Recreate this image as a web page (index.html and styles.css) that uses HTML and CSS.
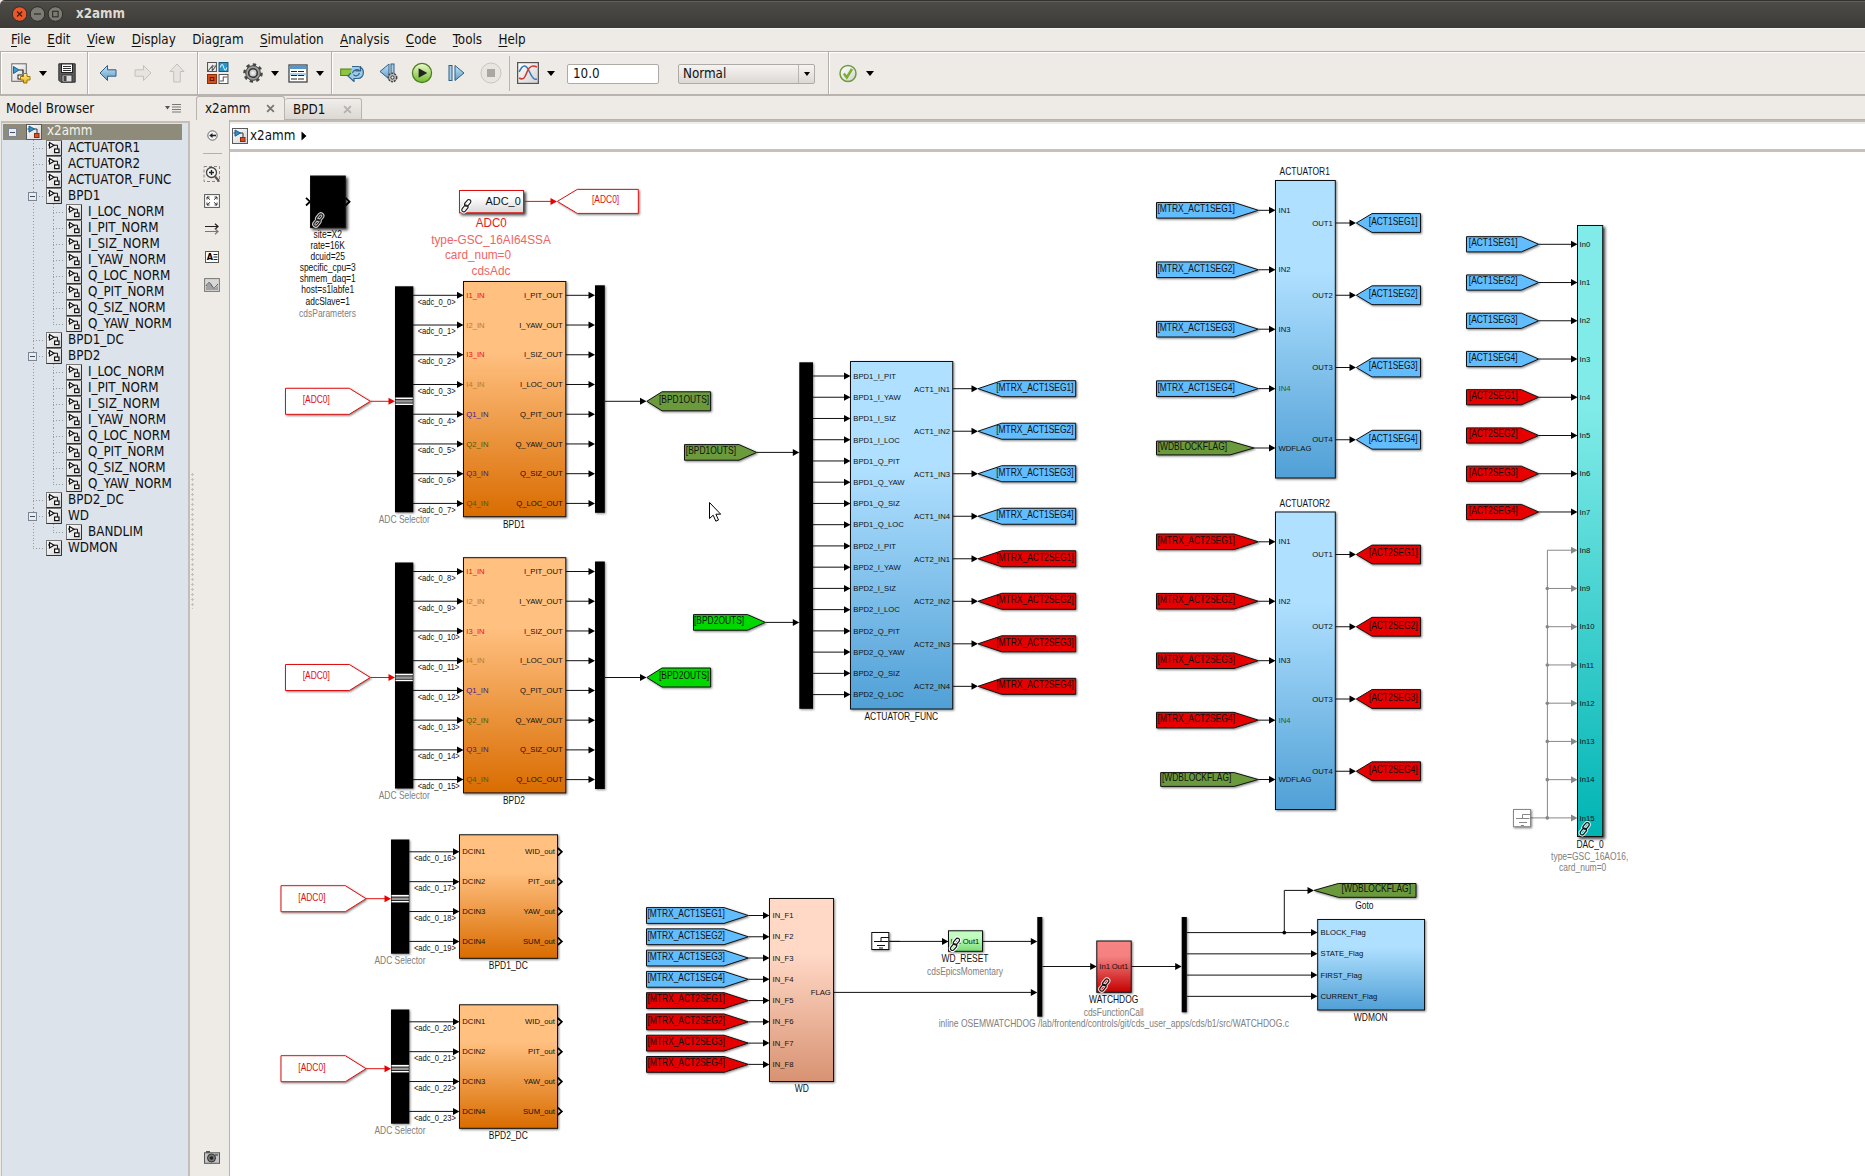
FILE: index.html
```html
<!DOCTYPE html>
<html lang="en">
<head>
<meta charset="utf-8">
<title>x2amm</title>
<link rel="stylesheet" href="styles.css">
</head>
<body>
<svg class="defs" width="0" height="0" aria-hidden="true">
  <defs>
    <linearGradient id="g-paper" x1="0" y1="0" x2="1" y2="1"><stop offset="0" stop-color="#fff"/><stop offset="1" stop-color="#d2d2d2"/></linearGradient>
    <linearGradient id="g-arrow" x1="0" y1="0" x2="0" y2="1"><stop offset="0" stop-color="#c4e2f4"/><stop offset="1" stop-color="#5f9dc8"/></linearGradient>
    <linearGradient id="g-play" x1="0" y1="0" x2="0" y2="1"><stop offset="0" stop-color="#eef9d0"/><stop offset="1" stop-color="#6cbb2a"/></linearGradient>
    <linearGradient id="g-plus" x1="0" y1="0" x2="0" y2="1"><stop offset="0" stop-color="#fff0a0"/><stop offset="1" stop-color="#f0b000"/></linearGradient>
    <symbol id="i-model" viewBox="0 0 16 16">
      <rect x=".5" y=".5" width="15" height="15" fill="url(#g-paper)" stroke="#5a5a5a"/>
      <path d="M1.5 5h2M8 5h3v4" fill="none" stroke="#333"/>
      <path d="M3 2l5.5 3L3 8.200z" fill="#2f8fca" stroke="#1c5f8c"/>
      <rect x="8.500" y="9.500" width="4.500" height="4" fill="#d8502a" stroke="#8c2a10"/>
    </symbol>
    <symbol id="i-sub" viewBox="0 0 16 16">
      <rect x=".5" y=".5" width="15" height="15" fill="url(#g-paper)" stroke="#777"/>
      <path d="M15.500 1v14.500H.5" fill="none" stroke="#333"/>
      <path d="M2 5h1.500M8 5.200h3.500v3.500" fill="none" stroke="#111"/>
      <path d="M3.500 2.600L8 5.200 3.500 8z" fill="#fff" stroke="#111" stroke-width="1.200"/>
      <rect x="8.600" y="9" width="4.400" height="3.600" fill="#fff" stroke="#111" stroke-width="1.200"/>
    </symbol>
  </defs>
</svg>

<header class="titlebar">
  <svg class="winbtns" width="54" height="18" viewBox="0 0 54 18">
    <circle cx="8.600" cy="9" r="7.300" fill="#e9582b" stroke="#2c2b27"/><path d="M6.100 6.500l5 5M11.100 6.500l-5 5" stroke="#4a1c0c" stroke-width="1.300"/>
    <circle cx="26.500" cy="9" r="7.300" fill="#7d7b73" stroke="#2c2b27"/><path d="M23 9h7" stroke="#33322e" stroke-width="1.300"/>
    <circle cx="44.400" cy="9" r="7.300" fill="#7d7b73" stroke="#2c2b27"/><rect x="41.600" y="6.300" width="5.500" height="5.500" fill="none" stroke="#33322e" stroke-width="1.200"/>
  </svg>
  <h1 class="title">x2amm</h1>
</header>

<nav class="menubar">
  <span><u>F</u>ile</span><span><u>E</u>dit</span><span><u>V</u>iew</span><span><u>D</u>isplay</span><span>Diag<u>r</u>am</span><span><u>S</u>imulation</span><span><u>A</u>nalysis</span><span><u>C</u>ode</span><span><u>T</u>ools</span><span><u>H</u>elp</span>
</nav>

<div class="toolbar">
  <div class="group g-file">
    <svg width="20" height="21" viewBox="0 0 20 21"><rect x=".8" y=".8" width="14.500" height="17.500" fill="url(#g-paper)" stroke="#666"/><path d="M2.500 3.500L8 7l-5.500 3.500z" fill="#3a9ad6" stroke="#1c5f8c"/><path d="M8 7h4v4" fill="none" stroke="#222" stroke-width="1.200"/><rect x="7" y="12" width="5" height="4" fill="#fff" stroke="#222"/><path d="M12.500 10.500h3.500v3h3v3.500h-3v3h-3.500v-3h-3v-3.500h3z" fill="url(#g-plus)" stroke="#9a7410"/></svg>
    <i class="caret"></i>
    <svg width="18" height="20" viewBox="0 0 18 20"><path d="M.8.8h16.400v18.400H2.800l-2-2z" fill="#5c5c5c" stroke="#333"/><rect x="3.500" y="1" width="11" height="8.500" fill="#fff" stroke="#222"/><path d="M5 3.500h8M5 5.500h8M5 7.500h8" stroke="#333"/><rect x="4" y="12" width="10" height="7" fill="#ddd" stroke="#333"/><rect x="5.500" y="13" width="3" height="5" fill="#444"/></svg>
  </div>
  <div class="group g-nav">
    <svg width="18" height="18" viewBox="0 0 18 18"><path d="M1 9l7.500-7.500v4.300h8.500v6.400H8.500v4.300z" fill="url(#g-arrow)" stroke="#2f5f86"/></svg>
    <svg width="18" height="18" viewBox="0 0 18 18"><path d="M17 9L9.500 1.500v4.300H1v6.400h8.500v4.300z" fill="#e6e4e1" stroke="#c3c0bc"/></svg>
    <svg width="16" height="20" viewBox="0 0 16 20"><path d="M8 1l7 7.500h-3.700V19H4.700V8.500H1z" fill="#e6e4e1" stroke="#c3c0bc"/></svg>
  </div>
  <div class="group g-lib">
    <svg width="22" height="22" viewBox="0 0 21 22" preserveAspectRatio="none"><rect x=".5" y=".5" width="8.500" height="9" fill="#eee" stroke="#555"/><path d="M1 9l4-5v5M5 4h2M5 9l4-6" fill="none" stroke="#555"/><rect x="11.500" y=".5" width="8.500" height="9" fill="#2a93c8" stroke="#175a80"/><path d="M12.500 5.500c1.500-4 2.500-4 3.500 0s2 3 3 0" fill="none" stroke="#d8f0ff"/><rect x=".5" y="12.500" width="8.500" height="9" fill="#d8501e" stroke="#8a2c0c"/><rect x="3" y="15.500" width="3.500" height="3" fill="none" stroke="#5a1a06"/><rect x="11.500" y="12.500" width="8.500" height="9" fill="#fff" stroke="#555"/><path d="M12.500 19h3v-4h4" fill="none" stroke="#555"/></svg>
    <svg width="20" height="20" viewBox="0 0 20 20"><circle cx="10" cy="10" r="8.500" fill="none" stroke="#444" stroke-width="2.500" stroke-dasharray="3.300 3.300"/><circle cx="10" cy="10" r="7.300" fill="#9b9b9b" stroke="#444"/><circle cx="10" cy="10" r="4.300" fill="#ccc" stroke="#333" stroke-width="1.600"/><circle cx="10" cy="10" r="1.800" fill="#eee"/></svg>
    <i class="caret"></i>
    <svg width="20" height="19" viewBox="0 0 20 19"><rect x="1" y="1" width="18" height="17" fill="#fff" stroke="#444" stroke-width="1.300"/><rect x="1.700" y="1.700" width="16.600" height="3.300" fill="#5796c8"/><rect x="1.700" y="9" width="16.600" height="2.500" fill="#a9cdea"/><path d="M3 7.500h14M3 11.500h14M3 15h14" stroke="#222" stroke-width="1.200" stroke-dasharray="6 1"/></svg>
    <i class="caret"></i>
  </div>
  <div class="group g-sim">
    <svg width="24" height="18" viewBox="0 0 24 18"><rect x=".7" y="5" width="12" height="6.500" fill="#8cc63c" stroke="#567c1c"/><path d="M12 2.500h6a4.500 5 0 0 1 0 12h-4v3L8 12l3-3" fill="#9fcbe8" stroke="#33658c" stroke-width="1.200"/><path d="M20.500 2v5h-5M12.500 9c1-3.500 5-4 7-2.500M19.500 9c-1 3.500-5 3.500-6 1.500" fill="none" stroke="#33658c" stroke-width="1.200"/></svg>
    <svg width="19" height="20" viewBox="0 0 19 20"><path d="M10 1v15L1 8.500z" fill="url(#g-arrow)" stroke="#2f5f86"/><rect x="12" y="1" width="3" height="12" fill="#a7d0ec" stroke="#2f5f86"/><circle cx="13.500" cy="14.500" r="4.200" fill="#bbb" stroke="#444" stroke-width="1.500" stroke-dasharray="2 1"/><circle cx="13.500" cy="14.500" r="1.600" fill="#eee" stroke="#333"/></svg>
    <svg width="22" height="22" viewBox="0 0 22 23"><circle cx="11" cy="11.500" r="10" fill="url(#g-play)" stroke="#4b7a1e" stroke-width="1.300"/><path d="M7.500 6.500l9 5-9 5z" fill="#222"/></svg>
    <svg width="17" height="18" viewBox="0 0 17 18"><rect x="1" y="1.500" width="3" height="15" fill="#a7d0ec" stroke="#2f5f86"/><path d="M7 1.500v15l9-7.500z" fill="url(#g-arrow)" stroke="#2f5f86"/></svg>
    <svg width="22" height="22" viewBox="0 0 22 22"><circle cx="11" cy="11" r="10" fill="#e8e5e1" stroke="#c9c6c2"/><rect x="7" y="7" width="8" height="8" fill="#aaa7a3"/></svg>
    <i class="sep"></i>
    <svg width="22" height="22" viewBox="0 0 21 22" preserveAspectRatio="none"><rect x=".6" y=".6" width="19.800" height="20.800" fill="url(#g-paper)" stroke="#555" stroke-width="1.200"/><path d="M2 10c4-9 7-7 10 0s5 8 7 7" fill="none" stroke="#3a7ab8" stroke-width="1.500"/><path d="M2 16c5 3 6-2 8-7s5-6 9-4" fill="none" stroke="#d03a30" stroke-width="1.500"/></svg>
    <i class="caret"></i>
    <div class="field">10.0</div>
    <div class="combo"><span>Normal</span><b><i class="caret small"></i></b></div>
  </div>
  <div class="group g-check">
    <svg width="18" height="19" viewBox="0 0 18 19"><circle cx="9" cy="9.500" r="8" fill="url(#g-paper)" stroke="#6f9a3a" stroke-width="1.500"/><path d="M4.800 9.500l3 4L13 5" fill="none" stroke="#7ab02a" stroke-width="2.400"/></svg>
    <i class="caret"></i>
  </div>
</div>

<div class="body">
  <aside class="browser">
    <div class="browser-head"><span>Model Browser</span>
      <svg width="16" height="9" viewBox="0 0 16 9"><path d="M0 2h5L2.500 5.500z" fill="#555"/><path d="M7 .5h9M7 3h9M7 5.500h9M7 8h9" stroke="#777"/></svg>
    </div>
    <div class="tree">
      <div class="root"><i class="box"></i><svg width="16" height="16"><use href="#i-model"/></svg><span>x2amm</span></div>
      <ul class="l1">
        <li><div><svg><use href="#i-sub"/></svg>ACTUATOR1</div></li>
        <li><div><svg><use href="#i-sub"/></svg>ACTUATOR2</div></li>
        <li><div><svg><use href="#i-sub"/></svg>ACTUATOR_FUNC</div></li>
        <li><div><i class="box"></i><svg><use href="#i-sub"/></svg>BPD1</div>
          <ul>
            <li><div><svg><use href="#i-sub"/></svg>I_LOC_NORM</div></li>
            <li><div><svg><use href="#i-sub"/></svg>I_PIT_NORM</div></li>
            <li><div><svg><use href="#i-sub"/></svg>I_SIZ_NORM</div></li>
            <li><div><svg><use href="#i-sub"/></svg>I_YAW_NORM</div></li>
            <li><div><svg><use href="#i-sub"/></svg>Q_LOC_NORM</div></li>
            <li><div><svg><use href="#i-sub"/></svg>Q_PIT_NORM</div></li>
            <li><div><svg><use href="#i-sub"/></svg>Q_SIZ_NORM</div></li>
            <li><div><svg><use href="#i-sub"/></svg>Q_YAW_NORM</div></li>
          </ul>
        </li>
        <li><div><svg><use href="#i-sub"/></svg>BPD1_DC</div></li>
        <li><div><i class="box"></i><svg><use href="#i-sub"/></svg>BPD2</div>
          <ul>
            <li><div><svg><use href="#i-sub"/></svg>I_LOC_NORM</div></li>
            <li><div><svg><use href="#i-sub"/></svg>I_PIT_NORM</div></li>
            <li><div><svg><use href="#i-sub"/></svg>I_SIZ_NORM</div></li>
            <li><div><svg><use href="#i-sub"/></svg>I_YAW_NORM</div></li>
            <li><div><svg><use href="#i-sub"/></svg>Q_LOC_NORM</div></li>
            <li><div><svg><use href="#i-sub"/></svg>Q_PIT_NORM</div></li>
            <li><div><svg><use href="#i-sub"/></svg>Q_SIZ_NORM</div></li>
            <li><div><svg><use href="#i-sub"/></svg>Q_YAW_NORM</div></li>
          </ul>
        </li>
        <li><div><svg><use href="#i-sub"/></svg>BPD2_DC</div></li>
        <li><div><i class="box"></i><svg><use href="#i-sub"/></svg>WD</div>
          <ul>
            <li><div><svg><use href="#i-sub"/></svg>BANDLIM</div></li>
          </ul>
        </li>
        <li><div><svg><use href="#i-sub"/></svg>WDMON</div></li>
      </ul>
    </div>
  </aside>
  <div class="splitter"></div>

  <section class="editor">
    <div class="tabs">
      <div class="tab active"><span>x2amm</span><svg width="9" height="9" viewBox="0 0 8 8"><path d="M1 1l6 6M7 1L1 7" stroke="#777" stroke-width="1.600"/></svg></div>
      <div class="tab"><span>BPD1</span><svg width="9" height="9" viewBox="0 0 8 8"><path d="M1 1l6 6M7 1L1 7" stroke="#b5b2ae" stroke-width="1.600"/></svg></div>
      <div class="tabfill"></div>
    </div>
    <div class="work">
      <div class="palette">
        <svg class="p-hide" width="11" height="11" viewBox="0 0 11 11"><circle cx="5.500" cy="5.500" r="4.700" fill="#f4f4f4" stroke="#666"/><path d="M5 5.500h4" stroke="#222" stroke-width="1.600"/><path d="M5.500 3L2.200 5.500 5.500 8z" fill="#222"/></svg>
        <i class="p-line"></i>
        <svg width="18" height="18" viewBox="0 0 18 18"><rect x="1" y="1.500" width="15.500" height="15" fill="none" stroke="#888" stroke-dasharray="3 2"/><circle cx="8.500" cy="7.500" r="5" fill="#f6f6f6" stroke="#444" stroke-width="1.300"/><path d="M6 7.500h5M8.500 5v5" stroke="#222" stroke-width="1.400"/><path d="M12 11.500l4 4.500" stroke="#555" stroke-width="2.200"/></svg>
        <svg width="16" height="14" viewBox="0 0 16 14"><rect x=".6" y=".6" width="14.800" height="12.800" fill="#fff" stroke="#555"/><path d="M3 5.500V3h2.500M10.500 3H13v2.500M13 8.500V11h-2.500M5.500 11H3V8.500M3 3l3 2.700M13 3l-3 2.700M13 11l-3-2.700M3 11l3-2.700" fill="none" stroke="#333"/></svg>
        <svg width="14" height="12" viewBox="0 0 14 12"><path d="M0 3.500h13M10 .8l3 2.700-3 2.700" fill="none" stroke="#222" stroke-width="1.200"/><path d="M0 8.500h13M10 5.800l3 2.700-3 2.700" fill="none" stroke="#777" stroke-width="1.200"/></svg>
        <svg width="14" height="12" viewBox="0 0 14 12"><rect x=".5" y=".5" width="13" height="11" fill="#fff" stroke="#555"/><text x="1.800" y="9" class="a-glyph">A</text><path d="M8.500 3.500h4M8.500 6h4M8.500 8.500h4" stroke="#222"/></svg>
        <svg width="16" height="14" viewBox="0 0 16 14"><rect x=".6" y=".6" width="14.800" height="12.800" fill="#d8d8d8" stroke="#777"/><path d="M2 9c3-5 4-5 6-1s3 2 6 0v4H2z" fill="#a0a0a0"/><path d="M2 8c3-5 4-4 6 0s3 1 6-2" fill="none" stroke="#555"/></svg>
        <svg class="p-cam" width="16" height="13" viewBox="0 0 16 13"><path d="M2 0h4v2H2z" fill="#555"/><rect x=".5" y="1.800" width="15" height="10.500" fill="#c4c4c4" stroke="#555"/><rect x="11" y="3" width="3" height="2" fill="#777"/><circle cx="7.500" cy="7" r="4" fill="#777" stroke="#333"/><circle cx="7.500" cy="7" r="1.800" fill="#222"/></svg>
      </div>
      <div class="main">
        <div class="crumb"><svg width="16" height="16"><use href="#i-model"/></svg><span>x2amm</span><svg width="6" height="10" viewBox="0 0 6 10"><path d="M.5.5v9L5.500 5z"/></svg></div>
        <svg class="canvas" id="canvas" width="1635" height="1024" viewBox="230 152 1635 1024"></svg>
      </div>
    </div>
  </section>
</div>
<script src="diagram.js"></script>
</body>
</html>
```

FILE: styles.css
```css
* { box-sizing: border-box; }

body {
  margin: 0;
  width: 1865px;
  height: 1176px;
  overflow: hidden;
  display: flex;
  flex-direction: column;
  background: #eeebe6;
  color: #111;
  font: 13.3px "DejaVu Sans Condensed", "DejaVu Sans", sans-serif;
  font-stretch: condensed;
}

.defs { position: absolute; }
svg { display: block; flex: none; }
ul { list-style: none; margin: 0; padding: 0; }

/* window frame */
.titlebar {
  height: 28px;
  display: flex;
  align-items: center;
  padding-left: 11px;
  background: linear-gradient(#33322e 0 1px, #62605a 1px 2px, #4c4b46 2px, #3c3b37);
  border-radius: 5px 0 0 0;
}
.title { margin: 0 0 0 11px; font-size: 13.3px; line-height: 16px; color: #dfdbd2; }

.menubar {
  height: 23px;
  padding: 0 0 1px 11px;
  display: flex;
  align-items: center;
  gap: 16.400px;
  line-height: 15px;
  border-top: 1px solid #f8f7f5;
}
.menubar u { text-underline-offset: 2px; }

/* toolbar */
.toolbar {
  height: 45px;
  display: flex;
  border-top: 1px solid #b3afaa;
  border-bottom: 2px solid #b8b3ae;
  box-shadow: inset 0 1px #fff;
}
.group { display: flex; align-items: center; border-left: 1px solid #b3afaa; box-shadow: inset 1px 0 #fff; }
.g-file { width: 87px; padding-left: 10px; }
.g-nav { width: 110px; padding-left: 11px; gap: 17px; }
.g-lib { width: 134px; padding-left: 9px; }
.g-sim { width: 497px; padding-left: 8px; }
.g-check { flex: 1; padding-left: 10px; }
.g-file .caret { margin: 0 11px 0 8px; }
.g-lib svg:nth-child(2) { margin-left: 14px; }
.g-lib .caret { margin: 0 9px 0 8px; }
.g-sim > svg:nth-child(2) { margin-left: 15px; }
.g-sim > svg:nth-child(3) { margin-left: 13px; }
.g-sim > svg:nth-child(4) { margin-left: 15px; }
.g-sim > svg:nth-child(5) { margin-left: 15px; }
.g-sim > .sep + svg { margin-left: 7px; }
.g-sim > .caret { margin-left: 8px; }
.g-check .caret { margin-left: 9px; }
.caret { width: 0; height: 0; border: 4.500px solid transparent; border-top: 5px solid #000; border-bottom: 0; }
.caret.small { border-width: 4px 3.500px 0; }
.sep { width: 1px; height: 35px; background: #b8b4af; margin-left: 7px; }
.field {
  width: 92px;
  height: 20px;
  margin: 1px 0 0 12px;
  padding-left: 5px;
  border: 1px solid #aeaaa5;
  border-radius: 2px;
  background: #fff;
  line-height: 18px;
}
.combo {
  width: 137px;
  height: 20px;
  margin: 1px 0 0 19px;
  display: flex;
  border: 1px solid #aeaaa5;
  border-radius: 2px;
  background: linear-gradient(#f6f4f2, #dcd9d4);
  line-height: 18px;
}
.combo span { flex: 1; padding-left: 4px; }
.combo b { width: 16px; border-left: 1px solid #b8b4af; display: grid; place-items: center; }

/* model browser */
.body { flex: 1; min-height: 0; display: flex; }
.browser { width: 190px; display: flex; flex-direction: column; }
.browser-head { height: 25px; padding: 0 9px 0 6px; display: flex; align-items: center; justify-content: space-between; line-height: 15px; }
.tree {
  flex: 1;
  margin-left: 1px;
  padding: 1px 0 0 1px;
  background: #dce3eb;
  border: 2px solid #c3beb8;
  border-width: 2px 2px 0 1px;
}
.root { width: 179px; height: 16px; display: flex; align-items: center; background: #8f8b7b; color: #f4f2ec; padding-left: 5px; }
.root svg { margin: 0 5px 0 9px; }
.root span { line-height: 14px; margin-bottom: 2px; }
.box { width: 9px; height: 9px; flex: none; border: 1px solid #7c8692; background: linear-gradient(#44505c, #44505c) center/5px 1px no-repeat #e8ecf2; }
.l1 { padding-left: 30px; }
.l1 ul { padding-left: 20px; }
.tree li { background: repeating-linear-gradient(#999 0 1px, transparent 1px 3px) 0 0/1px 100% no-repeat; }
.tree li:last-child { background-size: 1px 8px; }
.tree li > div {
  height: 16px;
  display: flex;
  align-items: center;
  line-height: 14px;
  padding-left: 13px;
  background: repeating-linear-gradient(90deg, #999 0 1px, transparent 1px 3px) 0 8px/10px 1px no-repeat;
}
.tree li svg { width: 16px; height: 16px; margin-right: 6px; }
.tree li .box { margin: 0 9px 0 -18px; }
.splitter {
  width: 6px;
  margin: 377px -6px 0 0;
  height: 136px;
  background: radial-gradient(circle at 1.500px 1.500px, #c5c0ba 1px, #fff 1.600px, transparent 2px) 1px 0/6px 5px repeat-y;
}

/* editor */
.editor { flex: 1; min-width: 0; display: flex; flex-direction: column; }
.tabs { height: 24px; display: flex; align-items: flex-end; margin-left: 6px; }
.tab {
  height: 22px;
  width: 77px;
  padding: 0 9px 0 8px;
  display: flex;
  align-items: center;
  justify-content: space-between;
  line-height: 15px;
  background: linear-gradient(#f0eeea, #dcd8d3);
  border: 1px solid #b8b3ae;
  border-width: 1px 1px 1px 0;
  border-radius: 3px 3px 0 0;
}
.tab.active { width: 89px; height: 24px; background: #eeebe6; border-width: 1px 1px 0 1px; }
.tabfill { flex: 1; border-bottom: 1px solid #b8b3ae; }
.work { flex: 1; min-height: 0; display: flex; }
.palette { width: 39px; padding: 10px 0 12px 5px; display: flex; flex-direction: column; align-items: center; }
.p-line { width: 19px; height: 1px; background: #b3afaa; margin: 12px 0 11px; }
.palette svg:nth-child(4) { margin-top: 11px; }
.palette svg:nth-child(5) { margin-top: 15px; }
.palette svg:nth-child(6) { margin-top: 16px; }
.palette svg:nth-child(7) { margin-top: 15px; }
.palette .p-cam { margin-top: auto; }
.a-glyph { font: bold 8px "DejaVu Sans", sans-serif; }
.main { flex: 1; border-left: 1px solid #b8b3ae; background: #fff; }
.crumb {
  height: 32px;
  display: flex;
  align-items: center;
  gap: 2px;
  padding-left: 2px;
  border-top: 2px solid #c0bbb5;
  border-bottom: 3px solid #c6c1bb;
  box-shadow: inset 0 2px #f0eeea;
}
.crumb svg:last-child { margin-left: 4px; }

/* diagram */
.canvas text { font-family: "Liberation Sans", Arial, sans-serif; font-stretch: normal; fill: #111; white-space: pre; }
.wire { fill: none; stroke: #111; }
.wire.red, .shape.red { stroke: #e01010; }
.wire.grey, .shape.grey { stroke: #888; }
.head { fill: #000; }
.head.red { fill: #e80000; }
.head.grey { fill: #888; }
.shape { stroke: #111; filter: drop-shadow(1.200px 1.500px 1px rgba(0, 0, 0, .5)); }
.shape.deep { filter: drop-shadow(2.500px 2.500px 1.500px rgba(0, 0, 0, .75)); }
.bar { fill: #000; filter: drop-shadow(1px 1.200px 1px rgba(0, 0, 0, .45)); }
.chevron { fill: none; stroke: #000; stroke-width: 1.800px; }
```

FILE: diagram.js
```js
const NS = "http://www.w3.org/2000/svg";
const canvas = document.getElementById("canvas");

function add(name, attrs, text) {
  const el = document.createElementNS(NS, name);
  for (const key in attrs) el.setAttribute(key, attrs[key]);
  if (text !== undefined) el.textContent = text;
  canvas.append(el);
  return el;
}

const BLUE = "#62bdff", RED = "#e60000", OLIVE = "#6b9a3c", GREEN = "#00d800";
const PORT = [7.7, 1], LABEL = [10, 0.845], SIGNAL = [8.6, 0.88];

const defs = add("defs", {});
function gradient(id, stops) {
  const g = document.createElementNS(NS, "linearGradient");
  g.id = id;
  g.setAttribute("x2", 0);
  g.setAttribute("y2", 1);
  for (const [offset, color] of stops) {
    const s = document.createElementNS(NS, "stop");
    s.setAttribute("offset", offset);
    s.setAttribute("stop-color", color);
    g.append(s);
  }
  defs.append(g);
}
gradient("orange", [[0, "#ffc080"], [0.3, "#ffc080"], [1, "#d96c00"]]);
gradient("sky", [[0, "#b0e0ff"], [0.3, "#b0e0ff"], [1, "#50a0d6"]]);
gradient("teal", [[0, "#80ebe8"], [0.3, "#80ebe8"], [1, "#00b4b4"]]);
gradient("peach", [[0, "#ffd8c6"], [0.3, "#ffd8c6"], [1, "#d89272"]]);
gradient("mint", [[0, "#c2fcc0"], [0.3, "#c2fcc0"], [1, "#78dc74"]]);
gradient("crimson", [[0, "#f88484"], [0.3, "#f48080"], [1, "#c40000"]]);
gradient("silver", [[0, "#ffffff"], [0.3, "#ffffff"], [1, "#d8d8d8"]]);

function text(x, y, str, anchor = "start", [size, scale] = LABEL, color) {
  const el = add("text", {
    transform: `translate(${x} ${y - 0.4}) scale(${scale} 1)`,
    "font-size": size,
    "text-anchor": anchor,
  }, str);
  if (color) el.style.fill = color;
}

function block(x1, y1, x2, y2, fill, cls = "") {
  add("rect", { x: x1, y: y1, width: x2 - x1, height: y2 - y1, fill, class: "shape " + cls });
}
function bar(x1, y1, x2, y2) {
  add("rect", { x: x1, y: y1, width: x2 - x1, height: y2 - y1, class: "bar" });
}
function head(x, y, cls = "") {
  add("path", { d: `M${x} ${y}l-6.500-3.500v7z`, class: "head " + cls });
}
function wire(x1, x2, y, cls = "") {
  add("path", { d: `M${x1} ${y}H${x2 - 3}`, class: "wire " + cls });
  head(x2, y, cls);
}
function fromTag(x, shoulder, tip, y, h, fill, str, tx, cls = "") {
  add("path", { d: `M${x} ${y - h}H${shoulder}L${tip} ${y}L${shoulder} ${y + h}H${x}z`, fill, class: "shape " + cls });
  text(tx, y + 2.3, str, "start", LABEL, cls && "#e01010");
}
function gotoTag(tip, shoulder, x, y, h, fill, str, tx, cls = "") {
  add("path", { d: `M${tip} ${y}L${shoulder} ${y - h}H${x}V${y + h}H${shoulder}z`, fill, class: "shape " + cls });
  text(tx, y + 2.3, str, "start", LABEL, cls && "#e01010");
}
function chevron(x, y) {
  add("path", { d: `M${x} ${y - 3.800}L${x + 4} ${y}L${x} ${y + 3.800}`, class: "chevron" });
}
/* library link badge: two interlocked chain links centred on x, y */
function link(x, y, ink, halo) {
  const t = `translate(${x} ${y}) rotate(-50)`;
  const links = [{ x: -6.8, y: -1.3 }, { x: -0.7, y: -2.7 }];
  for (const style of [{ stroke: halo, "stroke-width": 3.2 }, { stroke: ink, "stroke-width": 1.2 }]) {
    for (const l of links) {
      add("rect", { ...l, width: 7.5, height: 4, rx: 2, transform: t, fill: "none", ...style });
    }
  }
}
function stripe(x1, x2, y) {
  const w = x2 - x1;
  add("rect", { x: x1, y: y - 3.800, width: w, height: 1.700, fill: "#fff" });
  add("rect", { x: x1, y: y - 1.200, width: w, height: 2.600, fill: "#999" });
  add("rect", { x: x1, y: y + 2.200, width: w, height: 1.500, fill: "#fff" });
}

/* parameter block */
block(310.5, 176, 345.3, 227.7, "#000", "deep");
chevron(306, 201.7);
chevron(345.5, 201.7);
link(318.3, 220, "#222", "#ccc");
["site=X2", "rate=16K", "dcuid=25", "specific_cpu=3", "shmem_daq=1", "host=s1labfe1", "adcSlave=1"]
  .forEach((s, i) => text(327.7, [238.5, 249.5, 260.5, 271.5, 282.5, 293.5, 305.5][i] - 0.4, s, "middle"));
text(327.5, 317.2, "cdsParameters", "middle", LABEL, "#808080");

/* ADC card */
block(459.5, 190.5, 523.5, 212.8, "url(#silver)", "deep red");
text(520.7, 205, "ADC_0", "end", [11.3, 0.965]);
link(466.3, 205.7, "#222", "#fff");
wire(524, 557, 201.4, "red");
gotoTag(557.3, 577.3, 638.3, 201.4, 12, "#fff", "[ADC0]", 592, "red");
text(491.3, 227, "ADC0", "middle", [12.6, 0.92], "#e81818");
text(491, 244, "type-GSC_16AI64SSA", "middle", [12.6, 0.94], "#f06464");
text(478, 259, "card_num=0", "middle", [12.6, 0.94], "#f06464");
text(491, 275, "cdsAdc", "middle", [12.6, 0.94], "#f06464");

/* BPD1 and BPD2 */
const inColors = ["#f01010", "#c07a10", "#f01010", "#c07a10", "#401890", "#4c5c00", "#401890", "#4c5c00"];
const inNames = ["I1_IN", "I2_IN", "I3_IN", "I4_IN", "Q1_IN", "Q2_IN", "Q3_IN", "Q4_IN"];
const outNames = ["I_PIT_OUT", "I_YAW_OUT", "I_SIZ_OUT", "I_LOC_OUT", "Q_PIT_OUT", "Q_YAW_OUT", "Q_SIZ_OUT", "Q_LOC_OUT"];
[0, 1].forEach(n => {
  const dy = n * 276.2;
  fromTag(285.5, 349.3, 370.3, 401.3 + dy, 13, "#fff", "[ADC0]", 302.7, "red");
  wire(370.5, 395, 401.3 + dy, "red");
  bar(395, 286.3 + dy, 413.3, 512.3 + dy);
  stripe(395.5, 412.8, 401.3 + dy);
  block(463.5, 281.5 + dy, 565.8, 516.7 + dy, "url(#orange)");
  bar(595, 285.3 + dy, 604.8, 512.8 + dy);
  for (let i = 0; i < 8; i++) {
    const y = 295.3 + dy + i * 29.73;
    wire(413, 463.5, y);
    text(417.7, y + 9.8, `<adc_0_${n * 8 + i}>`, "start", SIGNAL);
    text(466.3, y + 3, inNames[i], "start", PORT, inColors[i]);
    text(562.8, y + 3, outNames[i], "end", PORT);
    wire(566, 595, y);
  }
  text(404.3, 523.5 + dy, "ADC Selector", "middle", LABEL, "#808080");
  text(514, 528.2 + dy, "BPD" + (n + 1), "middle");
  wire(605, 646.5, 401.3 + dy);
  gotoTag(646.8, 662, 710.6, 401.3 + dy, 9.5, n ? GREEN : OLIVE, `[BPD${n + 1}OUTS]`, 659);
});

/* DC blocks */
[0, 1].forEach(n => {
  const dy = n * 170;
  fromTag(281, 345.3, 366, 898.7 + dy, 13, "#fff", "[ADC0]", 298.3, "red");
  wire(366, 391, 898.7 + dy, "red");
  bar(391, 839.5 + dy, 409.3, 953.7 + dy);
  stripe(391.5, 408.8, 898.7 + dy);
  block(459.5, 834.8 + dy, 557.5, 958.3 + dy, "url(#orange)");
  ["WID", "PIT", "YAW", "SUM"].forEach((s, i) => {
    const y = 851.8 + dy + i * 29.87;
    wire(409, 459.5, y);
    text(413.9, y + 10, `<adc_0_${16 + n * 4 + i}>`, "start", SIGNAL);
    text(462.3, y + 2.7, "DCIN" + (i + 1), "start", PORT);
    text(555, y + 2.7, s + "_out", "end", PORT);
    chevron(557.8, y);
  });
  text(400, 964.5 + dy, "ADC Selector", "middle", LABEL, "#808080");
  text(508.3, 969.5 + dy, `BPD${n + 1}_DC`, "middle");
});

/* ACTUATOR_FUNC */
fromTag(684.5, 739, 756.7, 452.4, 7.8, OLIVE, "[BPD1OUTS]", 685.8);
wire(757, 799.3, 452.4);
fromTag(693.5, 747.5, 765.3, 622.4, 7.8, GREEN, "[BPD2OUTS]", 694);
wire(765.5, 799.3, 622.4);
bar(799.3, 362.3, 813, 708.8);
block(850.5, 361.5, 952.7, 709, "url(#sky)");
["BPD1", "BPD2"].forEach((b, n) => ["I_PIT", "I_YAW", "I_SIZ", "I_LOC", "Q_PIT", "Q_YAW", "Q_SIZ", "Q_LOC"].forEach((s, i) => {
  const y = 376 + (n * 8 + i) * 21.24;
  wire(813, 850.5, y);
  text(853.3, y + 3.2, `${b}_${s}`, "start", PORT);
}));
for (let i = 0; i < 8; i++) {
  const act = i < 4 ? 1 : 2, seg = i % 4 + 1, y = 388.7 + i * 42.52;
  text(950, y + 3.4, `ACT${act}_IN${seg}`, "end", PORT);
  wire(953, 978, y);
  gotoTag(978, 1001.7, 1075.7, y, 8, act === 1 ? BLUE : RED, `[MTRX_ACT${act}SEG${seg}]`, 996.2);
}
text(901.3, 720.7, "ACTUATOR_FUNC", "middle");

/* actuators */
[1, 2].forEach(n => {
  const dy = (n - 1) * 331.5, fill = n === 1 ? BLUE : RED;
  text(1304.7, 175.7 + dy, "ACTUATOR" + n, "middle");
  block(1275.5, 180.5 + dy, 1335.3, 478 + dy, "url(#sky)");
  for (let i = 1; i < 5; i++) {
    const yi = 210.3 + dy + (i - 1) * 59.45, yo = 223 + dy + (i - 1) * 72.25;
    fromTag(1156.5, 1234, 1258.3, yi, 7.8, fill, `[MTRX_ACT${n}SEG${i}]`, 1157.4);
    wire(1258.5, 1275.5, yi);
    text(1278.5, yi + 3, "IN" + i, "start", PORT, i === 4 ? "#1c5c2c" : undefined);
    text(1332.8, yo + 3, "OUT" + i, "end", PORT);
    wire(1335.5, 1356, yo);
    gotoTag(1356.3, 1372, 1420.5, yo, 9.4, fill, `[ACT${n}SEG${i}]`, 1368.8);
  }
  const x = n === 1 ? 0 : 4.2;
  fromTag(1156.5 + x, 1230 + x, 1254 + x, 448 + dy, 6.9, OLIVE, "[WDBLOCKFLAG]", 1157.7 + x);
  wire(1254 + x, 1275.5, 448 + dy);
  text(1278.5, 451 + dy, "WDFLAG", "start", PORT);
});

/* DAC */
block(1577.5, 225.5, 1602.7, 836.5, "url(#teal)", "deep");
for (let i = 0; i < 16; i++) {
  const y = 244.3 + i * 38.24;
  if (i < 8) {
    const act = i < 4 ? 1 : 2;
    fromTag(1466.5, 1521.3, 1538.7, y, 7.6, act === 1 ? BLUE : RED, `[ACT${act}SEG${i % 4 + 1}]`, 1468.8);
    wire(1539, 1577.5, y);
  } else {
    wire(1547.3, 1577.5, y, "grey");
    if (i > 8) add("circle", { cx: 1547.3, cy: y, r: 1.800, class: "head grey" });
  }
  text(1579.6, y + 3, "In" + i, "start", PORT);
}
add("path", { d: "M1547.400 550.200V817.800M1531 817.900H1547", class: "wire grey" });
block(1513.5, 809.5, 1530.5, 826.7, "#fff", "grey");
add("path", { d: "M1530 814.500H1522.500V818.500M1516 818.500H1529.500M1519 822.500H1527M1520.800 825.500H1524", class: "wire grey" });
link(1584.7, 828.7, "#111", "#c8f0f0");
text(1590, 848.3, "DAC_0", "middle");
text(1589.7, 860.5, "type=GSC_16AO16,", "middle", LABEL, "#808080");
text(1582.7, 871.5, "card_num=0", "middle", LABEL, "#808080");

/* watchdog chain */
block(769.5, 898.5, 833.5, 1081.5, "url(#peach)");
for (let i = 0; i < 8; i++) {
  const act = i < 4 ? 1 : 2, y = 915.5 + i * 21.27;
  fromTag(646.5, 724, 748.3, y, 7.9, act === 1 ? BLUE : RED, `[MTRX_ACT${act}SEG${i % 4 + 1}]`, 647.4);
  wire(748.5, 769.5, y);
  text(772.5, y + 3, "IN_F" + (i + 1), "start", PORT);
}
text(830.8, 995.3, "FLAG", "end", PORT);
text(801.7, 1092.3, "WD", "middle");
wire(834, 1037.3, 992.4);
block(871.8, 932.5, 888.8, 949.5, "#fff");
add("path", { d: "M889 937.500H881V941.500M874 941.500H888M877 945.500H885M879 948H883M889 941.400H900", class: "wire" });
wire(889, 948.5, 941.4);
block(948.5, 930.8, 982.5, 951.3, "url(#mint)");
text(950.5, 944.2, "In1", "start", PORT);
link(955, 944.3, "#111", "#fff");
text(979.3, 944.2, "Out1", "end", PORT);
text(965, 962.6, "WD_RESET", "middle");
text(965, 975.5, "cdsEpicsMomentary", "middle", LABEL, "#808080");
wire(983, 1037.3, 941.4);
bar(1037.3, 917, 1042.3, 1016.7);
wire(1042.5, 1096.7, 966.5);
block(1096.8, 941, 1131.2, 992.3, "url(#crimson)");
text(1099.3, 969.3, "In1", "start", PORT);
text(1128.3, 969.3, "Out1", "end", PORT);
link(1104.3, 985, "#111", "#ffd0d0");
text(1113.7, 1003.6, "WATCHDOG", "middle");
text(1113.7, 1016.5, "cdsFunctionCall", "middle", LABEL, "#808080");
text(938.7, 1027.7, "inline OSEMWATCHDOG /lab/frontend/controls/git/cds_user_apps/cds/b1/src/WATCHDOG.c", "start", [10, 0.853], "#808080");
wire(1131.5, 1181.7, 966.5);
bar(1181.7, 917, 1186.8, 1012.3);
block(1317.7, 919.5, 1424.5, 1010, "url(#sky)");
["BLOCK", "STATE", "FIRST", "CURRENT"].forEach((s, i) => {
  const y = 932.6 + i * 21.25;
  wire(1187, 1317.5, y);
  text(1320.5, y + 2.8, s + "_Flag", "start", PORT);
});
add("path", { d: "M1284.300 932.500V890.400H1310", class: "wire" });
add("circle", { cx: 1284.3, cy: 932.6, r: 1.900, class: "head" });
head(1314, 890.4);
gotoTag(1314, 1338.3, 1416, 890.4, 6.9, OLIVE, "[WDBLOCKFLAG]", 1341.6);
text(1364.3, 909, "Goto", "middle");
text(1370.7, 1021.7, "WDMON", "middle");

/* mouse pointer */
add("path", { d: "M709.500 502.500v16l3.700-3.300 2.600 6 2.700-1.200-2.600-5.800h4.800z", fill: "#fff", stroke: "#000" });
```
